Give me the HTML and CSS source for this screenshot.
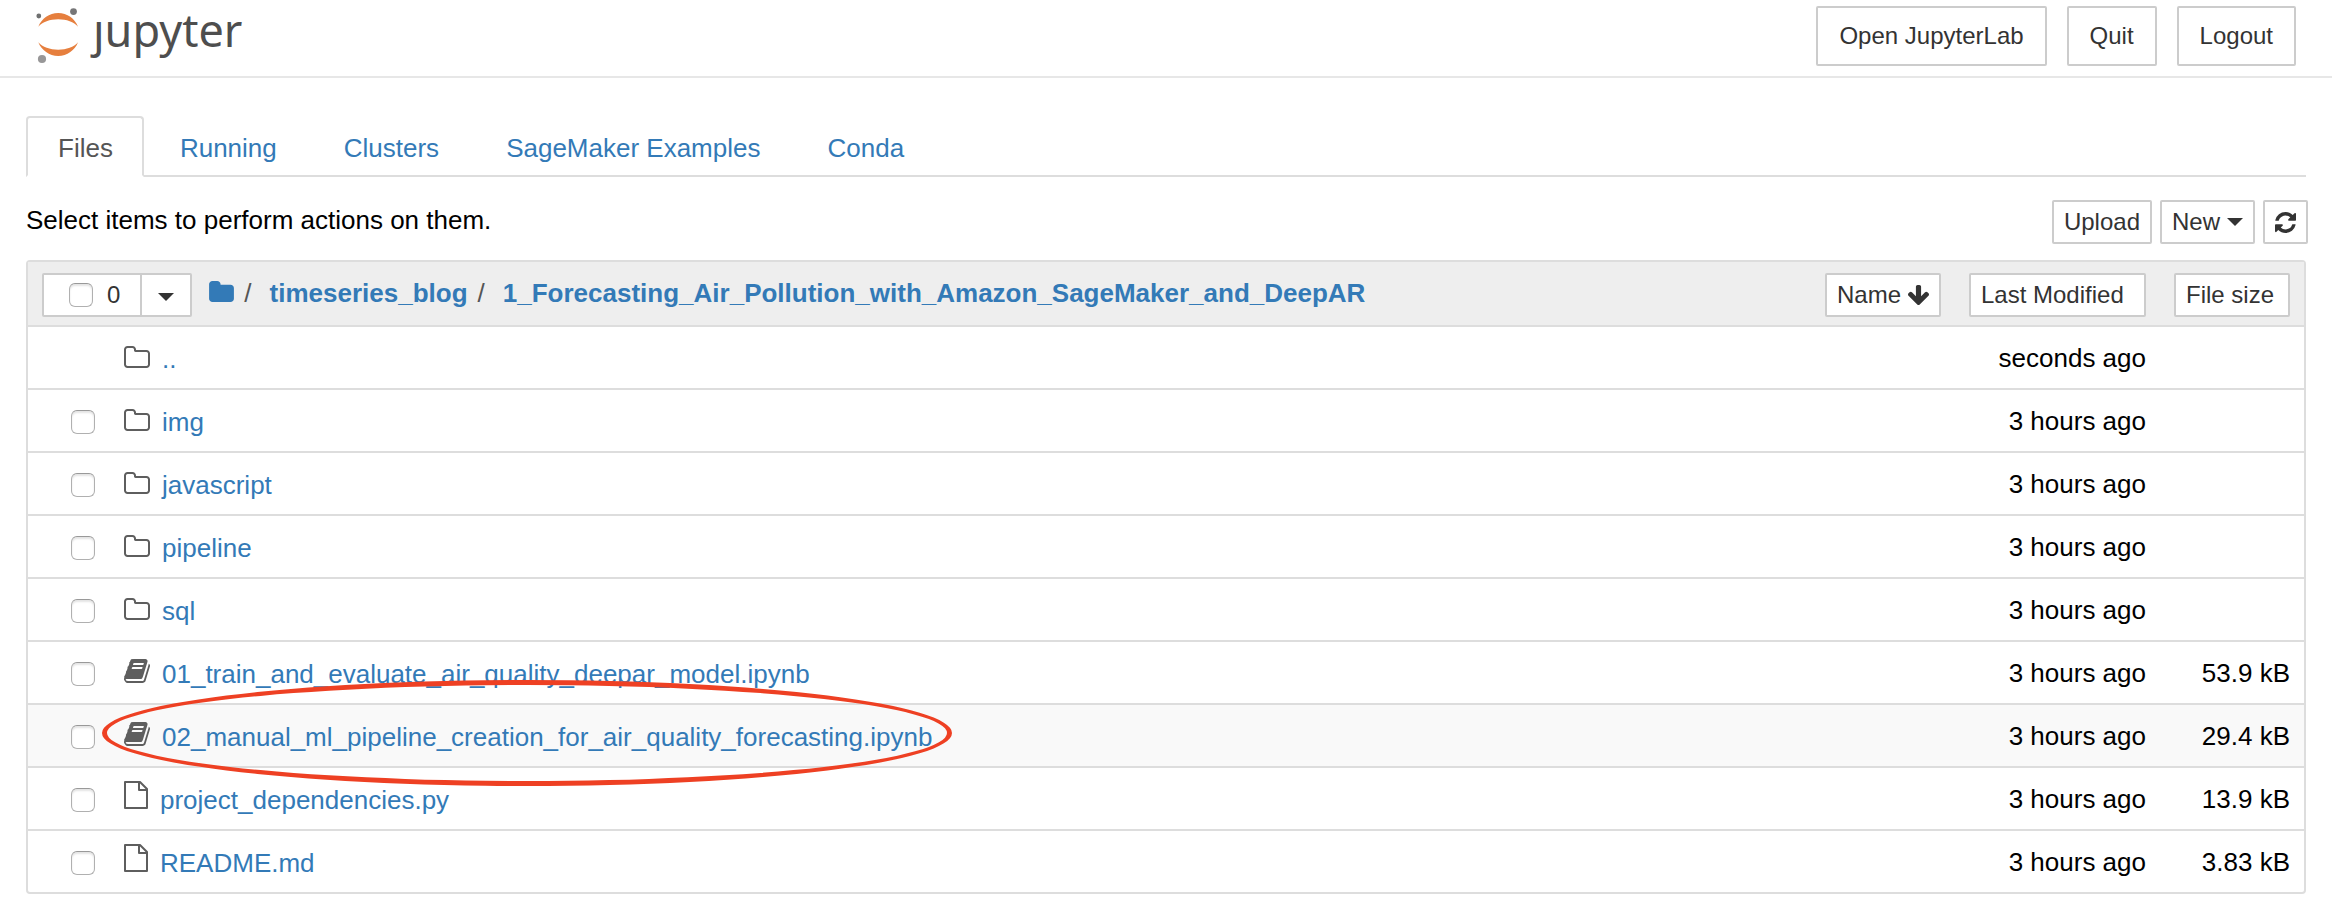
FILE: index.html
```html
<!DOCTYPE html>
<html lang="en">
<head>
<meta charset="utf-8">
<title>Jupyter file browser</title>
<link rel="stylesheet" href="styles.css">
</head>
<body>
<svg class="sprite" aria-hidden="true">
  <symbol id="folder-o" viewBox="96 128 1664 1408"><path d="M1632 1312v-704q0-40-28-68t-68-28H832q-40 0-68-28t-28-68v-64q0-40-28-68t-68-28H320q-40 0-68 28t-28 68v960q0 40 28 68t68 28h1216q40 0 68-28t28-68zm128-704v704q0 92-66 158t-158 66H320q-92 0-158-66t-66-158V352q0-92 66-158t158-66h320q92 0 158 66t66 158v32h672q92 0 158 66t66 158z"/></symbol>
  <symbol id="folder" viewBox="64 128 1664 1408"><path d="M1728 608v704q0 92-66 158t-158 66H288q-92 0-158-66t-66-158V352q0-92 66-158t158-66h320q92 0 158 66t66 158v32h672q92 0 158 66t66 158z"/></symbol>
  <symbol id="book" viewBox="64 128 1664 1536"><path fill-rule="evenodd" d="M1703 478q40 57 18 129l-275 906q-19 64-76.500 107.500T1247 1664H324q-77 0-148.500-53.500T76 1479q-24-67-2-127 0-4 3-27t4-37q1-8-3-21.500t-3-19.500q2-11 8-21t16.500-23.500T116 1179q23-38 45-91.500t30-91.500q3-10 .5-30t-.5-28q3-11 17-28t17-23q21-36 42-92t25-90q1-9-2.500-32t.5-28q4-13 22-30.500t22-22.500q19-26 42.500-84.500T404 411q1-8-3-25.500t-2-26.500q2-8 9-18t18-23 17-21q8-12 16.500-30.500t15-35 16-36 19.500-32 26.500-23.500 36-11.500 47.500 5.500l-1 3q38-9 51-9h761q74 0 114 56t18 130l-274 906q-36 119-71.500 153.500t-128.500 34.500H218q-27 0-38 15-11 16-1 43 24 70 144 70h923q29 0 56-15.500t35-41.500l300-987q7-22 5-57 38 15 61 43zM639 480q-4 13 2 22.500t20 9.500h608q13 0 25.500-9.500T1311 480l21-64q4-13-2-22.500t-20-9.500H702q-13 0-25.500 9.500T660 416zm-83 256q-4 13 2 22.500t20 9.500h608q13 0 25.500-9.500T1228 736l21-64q4-13-2-22.500t-20-9.500H619q-13 0-25.500 9.500T577 672z"/></symbol>
  <symbol id="file-o" viewBox="0 0 24 28"><path d="M1 1H16L23 8V27H1ZM15 1V9H23" fill="none" stroke="currentColor" stroke-width="2" stroke-linejoin="round"/></symbol>
  <symbol id="refresh" viewBox="128 128 1536 1536"><path d="M1639 1056q0 5-1 7-64 268-268 434.500T892 1664q-146 0-282.500-55T366 1452l-129 129q-19 19-45 19t-45-19-19-45v-448q0-26 19-45t45-19h448q26 0 45 19t19 45-19 45l-137 137q71 66 161 102t187 36q134 0 250-65t186-179q11-17 53-117 8-23 30-23h192q13 0 22.500 9.500t9.500 22.500zm25-800v448q0 26-19 45t-45 19h-448q-26 0-45-19t-19-45 19-45l138-138Q1097 384 896 384q-134 0-250 65T460 628q-11 17-53 117-8 23-30 23H178q-13 0-22.500-9.500T146 736v-7q65-268 270-434.500T896 128q146 0 284 55.500T1425 340l130-129q19-19 45-19t45 19 19 45z"/></symbol>
  <symbol id="arrow-down" viewBox="117 128 1558 1483"><path d="M1675 832q0 53-37 90l-651 652q-39 37-91 37-53 0-90-37L155 922q-38-36-38-90 0-53 38-91l74-75q39-37 91-37 53 0 90 37l294 294V256q0-52 38-90t90-38h128q52 0 90 38t38 90v704l294-294q37-37 90-37 52 0 91 37l75 75q37 39 37 91z"/></symbol>
</svg>

<header class="topbar">
  <a class="brand" href="#" aria-label="jupyter">
    <svg class="brand-mark" viewBox="34 6 48 60" aria-hidden="true">
      <path class="orbit" d="M38.300 26.700C41.500 18.700 49.300 13 58.200 13S75 18.700 78 26.700C74 22 66.500 19.300 58.200 19.300S42.500 22 38.300 26.700ZM38.300 42.300C41.500 50.300 49.300 56 58.200 56S75 50.300 78 42.300C74 47 66.500 49.700 58.200 49.700S42.500 47 38.300 42.300Z"/>
      <circle cx="38.800" cy="16" r="2.400" fill="#6f7070"/>
      <circle cx="73.500" cy="11.600" r="3.400" fill="#767677"/>
      <circle cx="42" cy="59" r="4.100" fill="#989798"/>
    </svg>
    <span class="brand-name">ȷupyter</span>
  </a>
  <div class="session">
    <button class="btn btn-lg" type="button">Open JupyterLab</button>
    <button class="btn btn-lg" type="button">Quit</button>
    <button class="btn btn-lg" type="button">Logout</button>
  </div>
</header>

<main class="page">
  <nav class="tabs">
    <a class="tab active" href="#files">Files</a>
    <a class="tab" href="#running">Running</a>
    <a class="tab" href="#clusters">Clusters</a>
    <a class="tab" href="#examples">SageMaker Examples</a>
    <a class="tab" href="#conda">Conda</a>
  </nav>

  <div class="toolbar">
    <p class="hint">Select items to perform actions on them.</p>
    <div class="tools">
      <button class="btn" type="button">Upload</button>
      <button class="btn" type="button">New <span class="caret"></span></button>
      <button class="btn" type="button" aria-label="Refresh"><svg class="i-refresh"><use href="#refresh"/></svg></button>
    </div>
  </div>

  <table class="files">
    <thead>
      <tr>
        <th class="name-head">
          <div class="head-row">
            <div class="select-group">
              <label class="select-all"><input class="check" type="checkbox" aria-label="Select all"><span>0</span></label>
              <button class="select-menu" type="button" aria-label="Select by type"><span class="caret"></span></button>
            </div>
            <div class="crumbs">
              <a class="crumb-root" href="#root" aria-label="Home"><svg class="i-folder"><use href="#folder"/></svg></a>
              <span class="slash">/</span>
              <a href="#blog">timeseries_blog</a>
              <span class="slash">/</span>
              <a href="#here">1_Forecasting_Air_Pollution_with_Amazon_SageMaker_and_DeepAR</a>
            </div>
            <button class="btn sort" type="button">Name <svg class="i-arrow"><use href="#arrow-down"/></svg></button>
          </div>
        </th>
        <th class="modified"><button class="btn sort sort-wide" type="button">Last Modified</button></th>
        <th class="size"><button class="btn sort" type="button">File size</button></th>
      </tr>
    </thead>
    <tbody>
      <tr>
        <td class="name"><div class="entry"><span class="check-slot"></span><svg class="i-dir"><use href="#folder-o"/></svg><a href="#up">..</a></div></td>
        <td class="modified">seconds ago</td><td class="size"></td>
      </tr>
      <tr>
        <td class="name"><div class="entry"><input class="check" type="checkbox" aria-label="img"><svg class="i-dir"><use href="#folder-o"/></svg><a href="#img">img</a></div></td>
        <td class="modified">3 hours ago</td><td class="size"></td>
      </tr>
      <tr>
        <td class="name"><div class="entry"><input class="check" type="checkbox" aria-label="javascript"><svg class="i-dir"><use href="#folder-o"/></svg><a href="#javascript">javascript</a></div></td>
        <td class="modified">3 hours ago</td><td class="size"></td>
      </tr>
      <tr>
        <td class="name"><div class="entry"><input class="check" type="checkbox" aria-label="pipeline"><svg class="i-dir"><use href="#folder-o"/></svg><a href="#pipeline">pipeline</a></div></td>
        <td class="modified">3 hours ago</td><td class="size"></td>
      </tr>
      <tr>
        <td class="name"><div class="entry"><input class="check" type="checkbox" aria-label="sql"><svg class="i-dir"><use href="#folder-o"/></svg><a href="#sql">sql</a></div></td>
        <td class="modified">3 hours ago</td><td class="size"></td>
      </tr>
      <tr>
        <td class="name"><div class="entry"><input class="check" type="checkbox" aria-label="01_train_and_evaluate_air_quality_deepar_model.ipynb"><svg class="i-book"><use href="#book"/></svg><a href="#nb1">01_train_and_evaluate_air_quality_deepar_model.ipynb</a></div></td>
        <td class="modified">3 hours ago</td><td class="size">53.9 kB</td>
      </tr>
      <tr class="hovered">
        <td class="name"><div class="entry"><input class="check" type="checkbox" aria-label="02_manual_ml_pipeline_creation_for_air_quality_forecasting.ipynb"><svg class="i-book"><use href="#book"/></svg><a href="#nb2">02_manual_ml_pipeline_creation_for_air_quality_forecasting.ipynb</a><span class="marker"></span></div></td>
        <td class="modified">3 hours ago</td><td class="size">29.4 kB</td>
      </tr>
      <tr>
        <td class="name"><div class="entry"><input class="check" type="checkbox" aria-label="project_dependencies.py"><svg class="i-file"><use href="#file-o"/></svg><a href="#py">project_dependencies.py</a></div></td>
        <td class="modified">3 hours ago</td><td class="size">13.9 kB</td>
      </tr>
      <tr>
        <td class="name"><div class="entry"><input class="check" type="checkbox" aria-label="README.md"><svg class="i-file"><use href="#file-o"/></svg><a href="#readme">README.md</a></div></td>
        <td class="modified">3 hours ago</td><td class="size">3.83 kB</td>
      </tr>
    </tbody>
  </table>
</main>
</body>
</html>
```
FILE: styles.css
```css
* { box-sizing: border-box; }

body {
  margin: 0;
  background: #fff;
  color: #000;
  font: 26px/37px "Liberation Sans", Arial, sans-serif;
}

a { color: #337ab7; text-decoration: none; }
svg { fill: currentColor; flex: none; }
.sprite { position: absolute; width: 0; height: 0; }

/* Header */
.topbar {
  display: flex;
  justify-content: space-between;
  align-items: flex-start;
  padding: 6px 36px 10px 34px;
  border-bottom: 2px solid #e7e7e7;
}
.brand { display: flex; color: #4e4e4e; }
.brand-mark { width: 48px; height: 60px; }
.orbit { fill: #e67f3e; }
.brand-name {
  margin-left: 11px;
  font: 45px/48px "Noto Sans", "Open Sans", sans-serif;
}
.session { display: flex; gap: 20px; }

/* Buttons */
.btn {
  display: inline-flex;
  align-items: center;
  gap: 7px;
  height: 44px;
  padding: 0 10px;
  border: 2px solid #ccc;
  border-radius: 2px;
  background: #fff;
  color: #333;
  font: 24px/36px "Liberation Sans", Arial, sans-serif;
  white-space: nowrap;
}
.btn-lg { height: 60px; padding: 0 21px; }
.caret {
  width: 16px;
  border: 8px solid transparent;
  border-top-color: #333;
  border-bottom: 0;
}

/* Tabs */
.page { padding: 38px 26px 24px; }
.tabs { display: flex; gap: 4px; border-bottom: 2px solid #ddd; }
.tab {
  padding: 12px 29px 8px 30px;
  margin-bottom: -2px;
  border: 2px solid transparent;
  border-radius: 4px 4px 0 0;
}
.tab.active {
  border-color: #ddd;
  border-bottom-color: #fff;
  background: #fff;
  color: #555;
}

/* Toolbar */
.toolbar {
  display: flex;
  justify-content: space-between;
  margin: 23px -2px 16px 0;
}
.hint { margin: 2px 0 0; }
.tools { display: flex; gap: 8px; }
.i-refresh { width: 21px; height: 21px; }

/* File list */
.files {
  width: 100%;
  border: 2px solid #ddd;
  border-radius: 4px;
  border-spacing: 0;
}
.files th { padding: 2px 0 0; background: #eee; text-align: right; }
.head-row { display: flex; align-items: center; height: 61px; padding-left: 14px; }
.sort { width: 116px; }
.sort-wide { width: 177px; }
.i-arrow { width: 21px; height: 20px; }

.select-group {
  display: flex;
  height: 44px;
  border: 2px solid #ccc;
  border-radius: 2px;
  background: #fff;
}
.select-all {
  display: flex;
  align-items: center;
  gap: 14px;
  padding: 0 20px 0 25px;
  color: #333;
  font-size: 24px;
  font-weight: 400;
}
.select-menu {
  display: flex;
  align-items: center;
  padding: 4px 16px 0;
  border: 0;
  border-left: 2px solid #ccc;
  background: none;
}
.crumbs { display: flex; flex: 1; align-items: baseline; padding: 0 0 3px 17px; }
.slash { padding: 0 18px 0 10px; color: #555; font-weight: 400; }
.i-folder { width: 25px; height: 21px; }

.files td {
  padding: 13px 0 11px;
  border-top: 2px solid #ddd;
  white-space: nowrap;
}
.files td.name { width: 100%; }
.files .modified { padding-left: 28px; text-align: right; }
.files .size { padding-left: 28px; padding-right: 14px; text-align: right; }
.hovered { background: #f9f9f9; }

.entry {
  position: relative;
  display: flex;
  align-items: baseline;
  height: 37px;
  padding-left: 43px;
  line-height: 39px;
}
.check {
  appearance: none;
  flex: none;
  align-self: center;
  width: 24px;
  height: 24px;
  margin: 0;
  border: 1px solid #b0b0b0;
  border-top-color: #999;
  border-radius: 6px;
  background: #fff;
  box-shadow: inset 0 2px 2px #e4e4e4;
}
.check-slot { width: 24px; }
.entry > svg { margin: 0 12px 0 29px; color: #5e5e5e; }
.i-dir { width: 26px; height: 22px; }
.i-book { width: 26px; height: 24px; }
.i-file { width: 24px; height: 28px; }

/* Hand-drawn highlight ring around a row's name */
.marker {
  position: absolute;
  left: 74px;
  top: -38px;
  width: 850px;
  height: 106px;
  border: 5px solid #ee4023;
  border-radius: 50%;
  pointer-events: none;
}
```
